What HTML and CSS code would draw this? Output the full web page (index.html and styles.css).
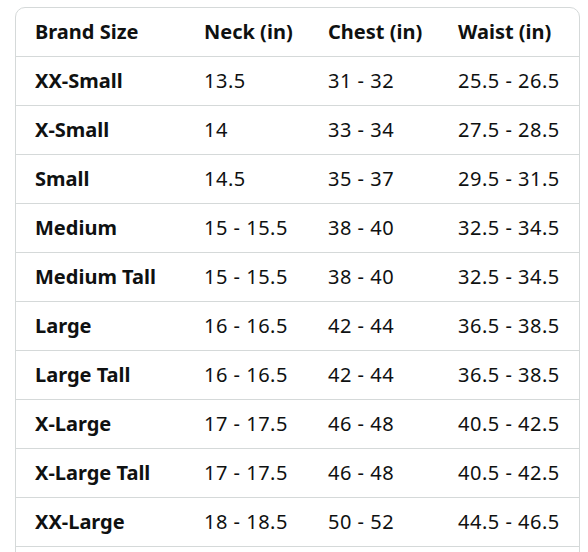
FILE: index.html
```html
<!DOCTYPE html>
<html>
<head>
<meta charset="utf-8">
<link rel="stylesheet" href="styles.css">
</head>
<body>
<div class="card">
  <table class="size-table">
    <colgroup>
      <col class="c1"><col class="c2"><col class="c3"><col class="c4">
    </colgroup>
    <thead>
      <tr><th>Brand Size</th><th>Neck (in)</th><th>Chest (in)</th><th>Waist (in)</th></tr>
    </thead>
    <tbody>
      <tr><th>XX-Small</th><td>13.5</td><td>31 - 32</td><td>25.5 - 26.5</td></tr>
      <tr><th>X-Small</th><td>14</td><td>33 - 34</td><td>27.5 - 28.5</td></tr>
      <tr><th>Small</th><td>14.5</td><td>35 - 37</td><td>29.5 - 31.5</td></tr>
      <tr><th>Medium</th><td>15 - 15.5</td><td>38 - 40</td><td>32.5 - 34.5</td></tr>
      <tr><th>Medium Tall</th><td>15 - 15.5</td><td>38 - 40</td><td>32.5 - 34.5</td></tr>
      <tr><th>Large</th><td>16 - 16.5</td><td>42 - 44</td><td>36.5 - 38.5</td></tr>
      <tr><th>Large Tall</th><td>16 - 16.5</td><td>42 - 44</td><td>36.5 - 38.5</td></tr>
      <tr><th>X-Large</th><td>17 - 17.5</td><td>46 - 48</td><td>40.5 - 42.5</td></tr>
      <tr><th>X-Large Tall</th><td>17 - 17.5</td><td>46 - 48</td><td>40.5 - 42.5</td></tr>
      <tr><th>XX-Large</th><td>18 - 18.5</td><td>50 - 52</td><td>44.5 - 46.5</td></tr>
      <tr class="spacer"><th></th><td></td><td></td><td></td></tr>
    </tbody>
  </table>
</div>
</body>
</html>
```
FILE: styles.css
```css
html, body {
  margin: 0;
  padding: 0;
  background: #ffffff;
}
body {
  padding: 7px 8px 0 15px;
  font-family: "Noto Sans", "Open Sans", sans-serif;
  color: #0f1111;
  overflow: hidden;
  height: 552px;
  box-sizing: border-box;
}
.card {
  width: 565px;
  border: 1px solid #d5d9d9;
  border-radius: 10px;
  box-sizing: border-box;
  overflow: hidden;
}
.size-table {
  width: 100%;
  border-collapse: collapse;
  table-layout: fixed;
  font-size: 20px;
}
.c1 { width: 169px; }
.c2 { width: 124px; }
.c3 { width: 130px; }
.size-table th,
.size-table td {
  height: 48px;
  padding: 0 0 0 19px;
  text-align: left;
  vertical-align: middle;
  white-space: nowrap;
  line-height: 24px;
}
.size-table th { font-weight: 700; }
.size-table td { font-weight: 400; letter-spacing: 0.5px; }
.size-table tbody tr th,
.size-table tbody tr td {
  border-top: 1px solid #d5d9d9;
}
```
